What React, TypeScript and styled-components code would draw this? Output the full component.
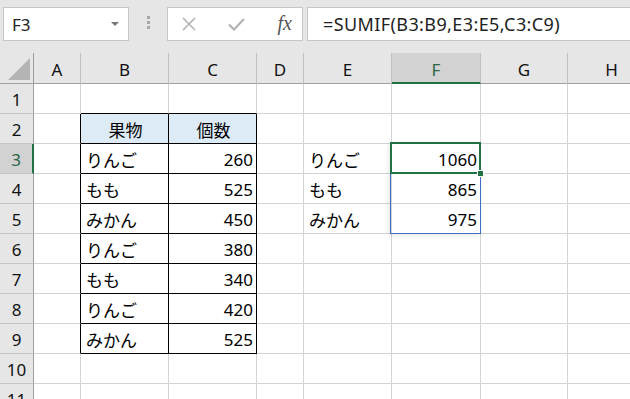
import { FC, ReactNode } from 'react';
import styled, { createGlobalStyle } from 'styled-components';

const GlobalStyle = createGlobalStyle`
    html, body {
        margin: 0;
        padding: 0;
        background: #ffffff;
    }
    body {
        font-family: 'Noto Sans', 'Noto Sans CJK JP', sans-serif;
    }
`;

const COLUMNS = ['A', 'B', 'C', 'D', 'E', 'F', 'G', 'H'];
const COL_WIDTHS = [34, 47, 88, 88, 47, 88, 89, 87, 88];
const ROW_COUNT = 11;

const TABLE = { colFrom: 1, colTo: 2, rowFrom: 2, rowTo: 9 };

type Align = 'left' | 'right' | 'center';

interface CellValue {
    text: string;
    align: Align;
    header?: boolean;
}

const data: Record<string, CellValue> = {
    B2: { text: '果物', align: 'center', header: true },
    C2: { text: '個数', align: 'center', header: true },
    B3: { text: 'りんご', align: 'left' },
    C3: { text: '260', align: 'right' },
    B4: { text: 'もも', align: 'left' },
    C4: { text: '525', align: 'right' },
    B5: { text: 'みかん', align: 'left' },
    C5: { text: '450', align: 'right' },
    B6: { text: 'りんご', align: 'left' },
    C6: { text: '380', align: 'right' },
    B7: { text: 'もも', align: 'left' },
    C7: { text: '340', align: 'right' },
    B8: { text: 'りんご', align: 'left' },
    C8: { text: '420', align: 'right' },
    B9: { text: 'みかん', align: 'left' },
    C9: { text: '525', align: 'right' },
    E3: { text: 'りんご', align: 'left' },
    F3: { text: '1060', align: 'right' },
    E4: { text: 'もも', align: 'left' },
    F4: { text: '865', align: 'right' },
    E5: { text: 'みかん', align: 'left' },
    F5: { text: '975', align: 'right' },
};

const inTable = (col: number, row: number) =>
    col >= TABLE.colFrom && col <= TABLE.colTo && row >= TABLE.rowFrom && row <= TABLE.rowTo;

const Window = styled.div`
    width: 630px;
    height: 399px;
    overflow: hidden;
    background: #e6e6e6;
    color: #000000;
`;

const FormulaBar = styled.div`
    height: 53px;
    box-sizing: border-box;
    padding: 7px 0 0 3px;
    display: flex;
    align-items: flex-start;
`;

const Box = styled.div<{ $width?: number }>`
    height: 34px;
    box-sizing: border-box;
    background: #ffffff;
    border: 1px solid #c6c6c6;
    display: flex;
    align-items: center;
    ${({ $width }) => ($width ? `width: ${$width}px; flex: none;` : 'flex: 1;')}
`;

const NameBox = styled(Box)`
    padding: 0 8px 0 8px;
    justify-content: space-between;
    font-size: 17px;
    color: #222222;
`;

const DropArrow = styled.span`
    width: 0;
    height: 0;
    border-left: 4px solid transparent;
    border-right: 4px solid transparent;
    border-top: 4px solid #777777;
    margin-right: 1px;
`;

const Grip = styled.div`
    width: 38px;
    height: 34px;
    display: flex;
    flex-direction: column;
    align-items: center;
    justify-content: center;
    gap: 2px;
    padding-bottom: 4px;
    box-sizing: border-box;
`;

const GripDot = styled.span`
    width: 3px;
    height: 3px;
    background: #a8a8a8;
`;

const ButtonBox = styled(Box)`
    padding: 0 10px 0 14px;
    justify-content: space-between;
    margin-right: 4px;
`;

const FxLabel = styled.span`
    font-family: 'Liberation Serif', serif;
    font-style: italic;
    font-size: 20px;
    color: #555555;
    padding-bottom: 2px;
`;

const FormulaInput = styled(Box)`
    border-right: none;
    padding-left: 15px;
    font-size: 18px;
    color: #222222;
    letter-spacing: 0.4px;
`;

const Sheet = styled.div`
    display: grid;
    grid-template-columns: ${COL_WIDTHS.map((w) => `${w}px`).join(' ')};
    grid-template-rows: 31px;
    grid-auto-rows: 30px;
    background: #ffffff;
`;

const HeaderCell = styled.div<{ $selected?: boolean; $corner?: boolean; $rowHead?: boolean }>`
    box-sizing: border-box;
    background: ${({ $selected }) => ($selected ? '#d2d2d2' : '#e6e6e6')};
    display: flex;
    align-items: center;
    justify-content: center;
    font-size: 17px;
    padding-top: 2px;
    color: ${({ $selected }) => ($selected ? '#2b6645' : '#111111')};
    border-right: 1px solid ${({ $rowHead }) => ($rowHead ? '#9e9e9e' : '#c0c0c0')};
    border-bottom: 1px solid ${({ $rowHead }) => ($rowHead ? '#c4c4c4' : '#9e9e9e')};
    ${({ $selected, $rowHead }) =>
        $selected && !$rowHead ? 'border-bottom: 2px solid #217346; padding-top: 3px;' : ''}
    ${({ $selected, $rowHead }) => ($selected && $rowHead ? 'border-right: 2px solid #217346;' : '')}
    ${({ $corner }) => ($corner ? 'border-right-color: #9e9e9e; position: relative;' : '')}
`;

const CornerMark = styled.span`
    position: absolute;
    left: 8px;
    bottom: 3px;
    width: 0;
    height: 0;
    border-left: 22px solid transparent;
    border-bottom: 22px solid #b4b4b4;
`;

const Cell = styled.div<{ $align: Align; $fill?: boolean; $rightDark?: boolean; $bottomDark?: boolean }>`
    position: relative;
    box-sizing: border-box;
    display: flex;
    align-items: center;
    justify-content: ${({ $align }) =>
        $align === 'left' ? 'flex-start' : $align === 'right' ? 'flex-end' : 'center'};
    padding: 2px 3px 0 5px;
    font-size: 17px;
    white-space: nowrap;
    background: ${({ $fill }) => ($fill ? '#ddebf7' : '#ffffff')};
    border-right: 1px solid ${({ $rightDark }) => ($rightDark ? '#000000' : '#d4d4d4')};
    border-bottom: 1px solid ${({ $bottomDark }) => ($bottomDark ? '#000000' : '#d4d4d4')};
`;

const RangeOutline = styled.div`
    position: absolute;
    z-index: 2;
    left: -2px;
    top: -2px;
    right: -1px;
    bottom: -61px;
    border: 1px solid #3e6fc1;
    box-shadow: -2px 2px 4px rgba(0, 0, 0, 0.08);
    pointer-events: none;
`;

const ActiveOutline = styled.div`
    position: absolute;
    z-index: 3;
    left: -2px;
    top: -2px;
    right: -1px;
    bottom: -1px;
    border: 2px solid #217346;
    pointer-events: none;
`;

const FillHandle = styled.span`
    position: absolute;
    right: -5px;
    bottom: -5px;
    width: 5px;
    height: 5px;
    background: #217346;
    border: 1px solid #ffffff;
`;

const CrossIcon: FC = () => (
    <svg width='14' height='14' viewBox='0 0 14 14'>
        <path d='M1 1 L13 13 M13 1 L1 13' stroke='#b3b3b3' strokeWidth='1.6' fill='none' />
    </svg>
);

const CheckIcon: FC = () => (
    <svg width='17' height='13' viewBox='0 0 17 13'>
        <path d='M1 6.5 L6 11.5 L16 1' stroke='#b3b3b3' strokeWidth='2.2' fill='none' />
    </svg>
);

const renderCell = (col: number, row: number): ReactNode => {
    const key = `${COLUMNS[col]}${row}`;
    const value = data[key];
    const rightDark = inTable(col, row) || inTable(col + 1, row);
    const bottomDark = inTable(col, row) || inTable(col, row + 1);
    const active = key === 'F3';

    return (
        <Cell
            key={key}
            $align={value?.align ?? 'left'}
            $fill={value?.header}
            $rightDark={rightDark}
            $bottomDark={bottomDark}
        >
            {value?.text}
            {active && (
                <>
                    <RangeOutline />
                    <ActiveOutline>
                        <FillHandle />
                    </ActiveOutline>
                </>
            )}
        </Cell>
    );
};

const App: FC = () => {
    const rows = Array.from({ length: ROW_COUNT }, (_, i) => i + 1);

    return (
        <Window>
            <GlobalStyle />
            <FormulaBar>
                <NameBox $width={126}>
                    <span>F3</span>
                    <DropArrow />
                </NameBox>
                <Grip>
                    <GripDot />
                    <GripDot />
                    <GripDot />
                </Grip>
                <ButtonBox $width={136}>
                    <CrossIcon />
                    <CheckIcon />
                    <FxLabel>fx</FxLabel>
                </ButtonBox>
                <FormulaInput>=SUMIF(B3:B9,E3:E5,C3:C9)</FormulaInput>
            </FormulaBar>
            <Sheet>
                <HeaderCell $corner>
                    <CornerMark />
                </HeaderCell>
                {COLUMNS.map((c) => (
                    <HeaderCell key={c} $selected={c === 'F'}>
                        {c}
                    </HeaderCell>
                ))}
                {rows.map((r) => [
                    <HeaderCell key={`h${r}`} $rowHead $selected={r === 3}>
                        {r}
                    </HeaderCell>,
                    ...COLUMNS.map((_, ci) => renderCell(ci, r)),
                ])}
            </Sheet>
        </Window>
    );
};

export default App;
